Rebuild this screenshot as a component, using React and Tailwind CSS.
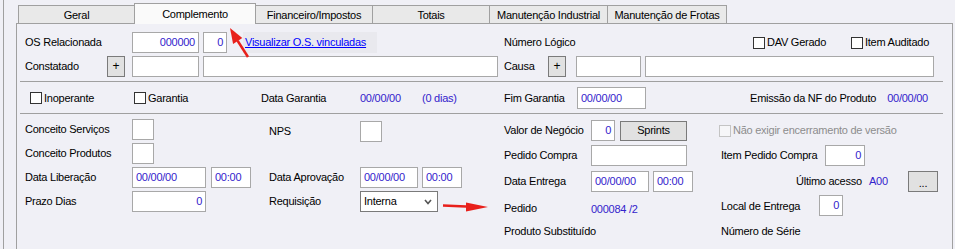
import React from 'react';

// small helpers for the win-forms look
const Box = ({ className = '', right, children }) => (
  <div
    className={`flex h-[21px] shrink-0 items-center border border-[#a8a8a8] bg-white px-[3px] text-[#3322cc] ${right ? 'justify-end' : ''} ${className}`}
  >
    {children}
  </div>
);

const Check = ({ className = '', disabled, children }) => (
  <div className={`flex items-center ${className}`}>
    <span
      className={`h-[12px] w-[12px] shrink-0 border ${disabled ? 'border-[#c4c4c4] bg-[#f6f6f8]' : 'border-[#333] bg-white'}`}
    />
    <span className={`ml-[2px] ${disabled ? 'text-[#8d8d8d]' : ''}`}>{children}</span>
  </div>
);

const PlusBtn = () => (
  <div className="flex h-[21px] w-[18px] shrink-0 items-center justify-center border border-[#7a7a7a] bg-[#e1e1e1] text-[12px] leading-none">
    +
  </div>
);

const Tab = ({ className = '', children }) => (
  <div className={`flex h-[18px] items-center justify-center border-t border-[#a0a0a0] bg-[#e9e9e9] pt-[2px] ${className}`}>
    {children}
  </div>
);

const Arrows = () => (
  <svg className="pointer-events-none absolute left-0 top-0" width="955" height="249">
    <line x1="248" y1="57" x2="237.6" y2="40.8" stroke="#e8201b" strokeWidth="2.5" />
    <polygon points="230,28 242.3,38.1 233.1,43.9" fill="#e8201b" />
    <line x1="443" y1="205.5" x2="466" y2="206.5" stroke="#e8201b" strokeWidth="2.5" />
    <polygon points="466,202.5 466,211.5 488,207" fill="#e8201b" />
  </svg>
);

export default function App() {
  return (
    <div className="relative h-[249px] w-[955px] overflow-hidden bg-[#f0f0f6] font-['Liberation_Sans',Arial,sans-serif] text-[11px] tracking-[-0.25px] text-black">
      <div className="ml-[3px] flex h-full border-l border-[#a0a0a0] pl-[12px] pt-[3px]">
        <div className="flex w-[937px] flex-col">
          {/* tabs */}
          <div className="flex h-[20px] items-end pl-[2px]">
            <Tab className="w-[116px] border-l">Geral</Tab>
            <div className="relative z-10 -mb-px flex h-[21px] w-[122px] items-center justify-center border-x border-t border-[#a0a0a0] bg-[#fafafa]">
              Complemento
            </div>
            <Tab className="w-[116px]">Financeiro/Impostos</Tab>
            <Tab className="w-[117px] border-l">Totais</Tab>
            <Tab className="w-[118px] border-l">Manutenção Industrial</Tab>
            <Tab className="w-[120px] border-x">Manutenção de Frotas</Tab>
          </div>

          {/* panel */}
          <div className="flex-1 border border-b-0 border-[#a0a0a0] pl-[8px] pr-[9px] pt-[8px]">
            {/* row 1 */}
            <div className="flex h-[21px] items-center">
              <div className="flex w-[479px] shrink-0 items-center">
                <span className="w-[107px] shrink-0">OS Relacionada</span>
                <Box className="w-[67px]" right>000000</Box>
                <Box className="ml-[4px] w-[24px]" right>0</Box>
                <div className="ml-[16px] flex h-[21px] w-[134px] items-center bg-[#e9e9ee] pl-[2px]">
                  <a className="text-[#0000ff] underline">Visualizar O.S. vinculadas</a>
                </div>
              </div>
              <div className="flex items-center">
                <span className="w-[249px] shrink-0">Número Lógico</span>
                <Check className="w-[98px]">DAV Gerado</Check>
                <Check>Item Auditado</Check>
              </div>
            </div>

            {/* row 2 */}
            <div className="mt-[2px] flex h-[22px] items-center">
              <div className="flex w-[479px] shrink-0 items-center">
                <span className="w-[82px] shrink-0">Constatado</span>
                <PlusBtn />
                <Box className="ml-[7px] w-[67px]" />
                <Box className="ml-[4px] w-[295px]" />
              </div>
              <div className="flex items-center">
                <span className="w-[44px] shrink-0">Causa</span>
                <PlusBtn />
                <Box className="ml-[10px] w-[65px]" />
                <Box className="ml-[4px] w-[289px]" />
              </div>
            </div>

            <div className="-ml-[5px] mt-[4px] h-px bg-[#a0a0a0]" />

            {/* row 3 */}
            <div className="mt-[5px] flex h-[22px] items-center">
              <div className="flex w-[479px] shrink-0 items-center">
                <div className="w-[109px] shrink-0 pl-[5px]">
                  <Check>Inoperante</Check>
                </div>
                <div className="w-[127px] shrink-0">
                  <Check>Garantia</Check>
                </div>
                <span className="w-[99px] shrink-0">Data Garantia</span>
                <span className="w-[62px] shrink-0 text-[#3322cc]">00/00/00</span>
                <span className="text-[#3322cc]">(0 dias)</span>
              </div>
              <div className="flex flex-1 items-center">
                <span className="w-[73px] shrink-0">Fim Garantia</span>
                <Box className="h-[22px] w-[69px]">00/00/00</Box>
                <div className="flex flex-1 justify-end pr-[15px]">
                  <span>Emissão da NF do Produto</span>
                  <span className="ml-[11px] text-[#3322cc]">00/00/00</span>
                </div>
              </div>
            </div>

            <div className="-ml-[5px] mt-[4px] h-px bg-[#a0a0a0]" />

            {/* lower section */}
            <div className="flex">
              <div className="flex w-[479px] shrink-0 flex-col gap-[3px] pt-[5px]">
                <div className="flex h-[21px] items-center">
                  <span className="w-[107px] shrink-0">Conceito Serviços</span>
                  <div className="w-[137px] shrink-0">
                    <Box className="w-[22px]" />
                  </div>
                  <span className="w-[91px] shrink-0 pt-[3px]">NPS</span>
                  <Box className="mt-[4px] w-[22px]" />
                </div>
                <div className="flex h-[21px] items-center">
                  <span className="w-[107px] shrink-0">Conceito Produtos</span>
                  <Box className="w-[22px]" />
                </div>
                <div className="flex h-[21px] items-center">
                  <span className="w-[107px] shrink-0">Data Liberação</span>
                  <div className="flex w-[137px] shrink-0">
                    <Box className="w-[74px]">00/00/00</Box>
                    <Box className="ml-[5px] w-[40px]">00:00</Box>
                  </div>
                  <span className="w-[91px] shrink-0">Data Aprovação</span>
                  <Box className="w-[58px]">00/00/00</Box>
                  <Box className="ml-[4px] w-[40px]">00:00</Box>
                </div>
                <div className="flex h-[21px] items-center">
                  <span className="w-[107px] shrink-0">Prazo Dias</span>
                  <div className="w-[137px] shrink-0">
                    <Box className="w-[74px]" right>0</Box>
                  </div>
                  <span className="w-[91px] shrink-0">Requisição</span>
                  <div className="flex h-[21px] w-[78px] items-center justify-between border border-[#7a7a7a] bg-white pl-[3px] pr-[5px]">
                    <span>Interna</span>
                    <svg width="8" height="6" viewBox="0 0 8 6">
                      <path d="M1 1 L4 4.5 L7 1" fill="none" stroke="#555" strokeWidth="1.6" />
                    </svg>
                  </div>
                </div>
              </div>

              <div className="flex flex-1 flex-col">
                <div className="mt-[6px] flex h-[21px] items-center">
                  <span className="w-[87px] shrink-0">Valor de Negócio</span>
                  <Box className="w-[24px]" right>0</Box>
                  <div className="ml-[5px] flex h-[20px] w-[67px] items-center justify-center border border-[#7a7a7a] bg-[#e1e1e1]">
                    Sprints
                  </div>
                  <Check className="ml-[32px]" disabled>Não exigir encerramento de versão</Check>
                </div>
                <div className="mt-[4px] flex h-[21px] items-center">
                  <span className="w-[87px] shrink-0">Pedido Compra</span>
                  <Box className="w-[96px]" />
                  <span className="ml-[34px] w-[104px] shrink-0">Item Pedido Compra</span>
                  <Box className="w-[40px]" right>0</Box>
                </div>
                <div className="mt-[5px] flex h-[21px] items-center">
                  <span className="w-[87px] shrink-0">Data Entrega</span>
                  <Box className="w-[58px]">00/00/00</Box>
                  <Box className="ml-[4px] w-[40px]">00:00</Box>
                  <span className="ml-[103px] w-[73px] shrink-0">Último acesso</span>
                  <span className="text-[#3322cc]">A00</span>
                  <div className="ml-auto mr-[5px] flex h-[21px] w-[30px] items-end justify-center border border-[#7a7a7a] bg-[#e1e1e1] pb-[2px] leading-none">
                    ...
                  </div>
                </div>
                <div className="mt-[3px] flex h-[21px] items-center">
                  <span className="mt-[6px] w-[87px] shrink-0">Pedido</span>
                  <span className="mt-[7px] w-[130px] shrink-0 text-[#3322cc]">000084 /2</span>
                  <span className="mt-[2px] w-[98px] shrink-0">Local de Entrega</span>
                  <Box className="w-[24px]" right>0</Box>
                </div>
                <div className="mt-[5px] flex h-[21px] items-center">
                  <span className="w-[217px] shrink-0">Produto Substituído</span>
                  <span>Número de Série</span>
                </div>
              </div>
            </div>
          </div>
        </div>
      </div>
      <Arrows />
    </div>
  );
}
